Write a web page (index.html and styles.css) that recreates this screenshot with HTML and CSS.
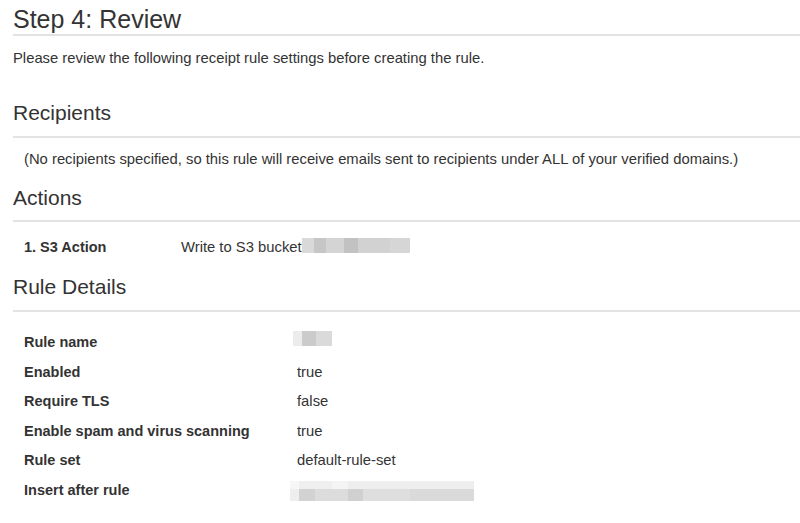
FILE: index.html
```html
<!DOCTYPE html>
<html>
	<head>
		<meta charset="UTF-8">
		<title>Step 4: Review</title>
		<link rel="stylesheet" href="styles.css">
	</head>
	<body>
		<div class="page">
			<h1 class="title">Step 4: Review</h1>
			<p class="intro">Please review the following receipt rule settings before creating the rule.</p>

			<!--收件人-->
			<h2 class="section">Recipients</h2>
			<p class="note">(No recipients specified, so this rule will receive emails sent to recipients under ALL of your verified domains.)</p>

			<!--动作-->
			<h2 class="section section-actions">Actions</h2>
			<div class="action-row">
				<span class="action-label">1. S3 Action</span>
				<span class="action-value">Write to S3 bucket<span class="redact redact-bucket"></span></span>
			</div>

			<!--规则详情-->
			<h2 class="section section-details">Rule Details</h2>
			<div class="details">
				<div class="label">Rule name</div>
				<div class="value"><span class="redact redact-name"></span></div>
				<div class="label">Enabled</div>
				<div class="value">true</div>
				<div class="label">Require TLS</div>
				<div class="value">false</div>
				<div class="label">Enable spam and virus scanning</div>
				<div class="value">true</div>
				<div class="label">Rule set</div>
				<div class="value">default-rule-set</div>
				<div class="label">Insert after rule</div>
				<div class="value"><span class="redact redact-after"></span></div>
			</div>
		</div>
	</body>
</html>
```

FILE: styles.css
```css
*{
	margin: 0px;
	padding: 0px;
}

body{
	background: #fff;
	color: #333;
	font-family: "Liberation Sans", Arial, sans-serif;
	font-size: 14.8px;
}

.page{
	padding-left: 13px;
}

/*标题*/
.title{
	font-size: 25px;
	font-weight: normal;
	line-height: 30px;
	padding-top: 4px;
	border-bottom: solid 2px #e3e3e3;
}

.intro{
	line-height: 20px;
	margin-top: 12px;
}

/*分区标题*/
.section{
	font-size: 21px;
	font-weight: normal;
	line-height: 26px;
	margin-top: 32px;
	padding-bottom: 10px;
	border-bottom: solid 2px #e3e3e3;
}

.section-actions{
	margin-top: 16px;
	padding-bottom: 9px;
}

.section-details{
	margin-top: 17px;
}

.note{
	line-height: 20px;
	margin-top: 11px;
	padding-left: 11px;
}

.action-row{
	display: flex;
	line-height: 20px;
	margin-top: 15px;
	padding-left: 11px;
}

.action-label{
	width: 157px;
	font-weight: bold;
	font-size: 14.5px;
}

/*详情列表*/
.details{
	display: grid;
	grid-template-columns: 273px 1fr;
	grid-auto-rows: 29.6px;
	line-height: 29.6px;
	margin-top: 16px;
	padding-left: 11px;
}

.label{
	font-weight: bold;
	font-size: 14.5px;
}

/*打码部分*/
.redact{
	display: inline-block;
}

.redact-bucket{
	width: 108px;
	height: 15px;
	vertical-align: -1px;
	background: linear-gradient(to right,
		#d9d9d9 0, #d9d9d9 12px,
		#c6c6c6 12px, #c6c6c6 24px,
		#d4d4d4 24px, #d4d4d4 42px,
		#c2c2c2 42px, #c2c2c2 56px,
		#d2d2d2 56px, #d2d2d2 88px,
		#d6d6d6 88px, #d6d6d6 108px);
}

.redact-name{
	width: 39px;
	height: 15px;
	margin-left: -4px;
	vertical-align: 1px;
	background: linear-gradient(to right,
		#ececec 0, #ececec 9px,
		#cbcbcb 9px, #cbcbcb 23px,
		#dadada 23px, #dadada 39px);
}

.redact-after{
	width: 184px;
	height: 20px;
	margin-left: -7px;
	vertical-align: -6px;
	background:
		linear-gradient(to right,
			#f6f6f6 0, #f6f6f6 9px,
			#efefef 9px, #efefef 42px,
			#f4f4f4 42px, #f4f4f4 58px,
			#eeeeee 58px, #eeeeee 184px) top / 100% 8px no-repeat,
		linear-gradient(to right,
			#eeeeee 0, #eeeeee 9px,
			#d2d2d2 9px, #d2d2d2 25px,
			#dcdcdc 25px, #dcdcdc 58px,
			#d0d0d0 58px, #d0d0d0 73px,
			#dedede 73px, #dedede 120px,
			#dadada 120px, #dadada 184px) bottom / 100% 12px no-repeat;
}
```
